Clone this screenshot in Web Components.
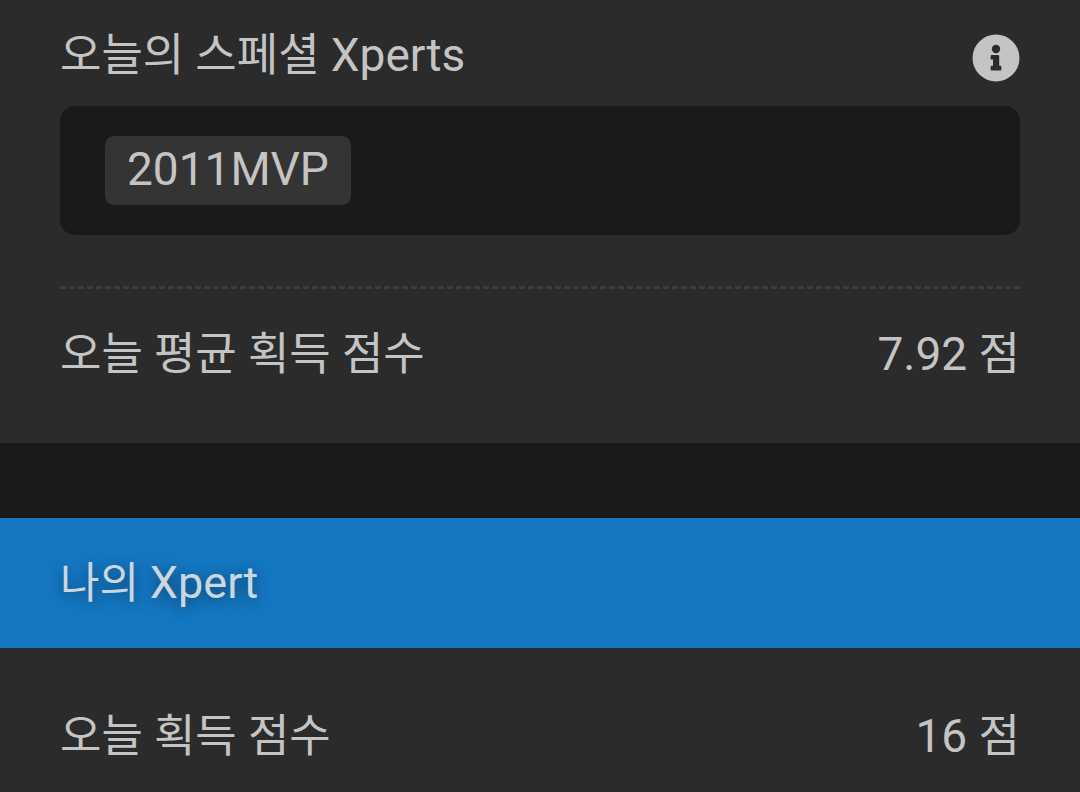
<!DOCTYPE html>
<html lang="ko">
<head>
<meta charset="utf-8">
<meta name="viewport" content="width=device-width, initial-scale=1">
<title>Xperts</title>
<style>
  body {
    margin: 0;
    background: #2b2b2b;
    color: #c4c4c4;
    font-family: Roboto, "Noto Sans CJK KR", sans-serif;
    font-size: 45px;
    line-height: 70px;
    --panel: #2b2b2b;
    --deep: #1a1a1a;
    --chip: #343434;
    --accent: #1477c2;
    --gutter: 60px;
  }

  .latin {
    font-size: 46px;
  }

  xpert-banner .latin {
    font-size: 45px;
  }
</style>
</head>
<body>
<xpert-page>
  <xpert-panel>
    <xpert-heading>오늘의 스페셜 <span class="latin">Xperts</span></xpert-heading>
    <xpert-list>
      <xpert-chip>2011MVP</xpert-chip>
    </xpert-list>
    <xpert-divider></xpert-divider>
    <score-row value="7.92" unit="점">오늘 평균 획득 점수</score-row>
  </xpert-panel>
  <xpert-banner>나의 <span class="latin">Xpert</span></xpert-banner>
  <xpert-panel>
    <score-row value="16" unit="점">오늘 획득 점수</score-row>
  </xpert-panel>
</xpert-page>

<script>
class XpertPage extends HTMLElement {
  constructor() {
    super();
    this.attachShadow({ mode: "open" }).innerHTML = `
      <style>
        :host {
          display: flex;
          flex-direction: column;
        }
      </style>
      <slot></slot>
    `;
  }
}

class XpertPanel extends HTMLElement {
  constructor() {
    super();
    this.attachShadow({ mode: "open" }).innerHTML = `
      <style>
        :host {
          display: flex;
          flex-direction: column;
          padding: 23px var(--gutter);
          background: var(--panel);
        }
      </style>
      <slot></slot>
    `;
  }
}

class XpertHeading extends HTMLElement {
  constructor() {
    super();
    this.attachShadow({ mode: "open" }).innerHTML = `
      <style>
        :host {
          display: flex;
          align-items: center;
          justify-content: space-between;
          margin-bottom: 18px;
          line-height: 64px;
        }

        h2 {
          margin: 0;
          font-size: inherit;
          font-weight: normal;
        }

        button {
          display: flex;
          padding: 4px 0 0;
          border: none;
          background: none;
          color: inherit;
          cursor: pointer;
        }

        svg {
          width: 48px;
          height: 48px;
        }
      </style>
      <h2><slot></slot></h2>
      <button type="button" aria-label="안내">
        <svg viewBox="0 0 48 48" aria-hidden="true">
          <circle cx="24" cy="24" r="23.5" fill="currentColor"/>
          <circle cx="24" cy="15" r="4.2" fill="#2b2b2b"/>
          <path fill="#2b2b2b" d="M19.8 21h6.2q1.2 0 1.2 1.2v9.6h1q1.2 0 1.2 1.2v2.2q0 1.2-1.2 1.2h-8.4q-1.2 0-1.2-1.2v-2.2q0-1.2 1.2-1.2h1.2v-6.2h-1.2q-1.2 0-1.2-1.2v-2.2q0-1.2 1.2-1.2z"/>
        </svg>
      </button>
    `;
  }
}

class XpertList extends HTMLElement {
  constructor() {
    super();
    this.attachShadow({ mode: "open" }).innerHTML = `
      <style>
        :host {
          display: flex;
          flex-wrap: wrap;
          gap: 15px;
          padding: 30px 45px;
          border-radius: 15px;
          background: var(--deep);
        }
      </style>
      <slot></slot>
    `;
  }
}

class XpertChip extends HTMLElement {
  constructor() {
    super();
    this.attachShadow({ mode: "open" }).innerHTML = `
      <style>
        :host {
          display: block;
          padding: 0 22px 3px;
          border-radius: 9px;
          background: var(--chip);
          font-size: 46px;
          line-height: 66px;
        }
      </style>
      <slot></slot>
    `;
  }
}

class XpertDivider extends HTMLElement {
  constructor() {
    super();
    this.attachShadow({ mode: "open" }).innerHTML = `
      <style>
        :host {
          display: block;
          margin-top: 51px;
          border-top: 3px dashed #3d3d3d;
        }
      </style>
    `;
  }
}

class ScoreRow extends HTMLElement {
  constructor() {
    super();
    this.attachShadow({ mode: "open" });
  }

  connectedCallback() {
    this.render();
  }

  render() {
    this.shadowRoot.innerHTML = `
      <style>
        :host {
          display: flex;
          align-items: baseline;
          justify-content: space-between;
          padding: 30px 0;
        }

        .number {
          font-size: 46px;
        }
      </style>
      <span><slot></slot></span>
      <span><span class="number">${this.getAttribute("value")} </span>${this.getAttribute("unit")}</span>
    `;
  }
}

class XpertBanner extends HTMLElement {
  constructor() {
    super();
    this.attachShadow({ mode: "open" }).innerHTML = `
      <style>
        :host {
          display: block;
          border-top: 75px solid var(--deep);
          padding: 30px var(--gutter);
          background: var(--accent);
          color: #ccd6de;
          text-shadow: 0 3px 15px rgba(0, 0, 0, 0.5);
        }

        h2 {
          margin: 0;
          font-size: 43px;
          font-weight: normal;
          line-height: 69px;
        }
      </style>
      <h2><slot></slot></h2>
    `;
  }
}

customElements.define("xpert-page", XpertPage);
customElements.define("xpert-panel", XpertPanel);
customElements.define("xpert-heading", XpertHeading);
customElements.define("xpert-list", XpertList);
customElements.define("xpert-chip", XpertChip);
customElements.define("xpert-divider", XpertDivider);
customElements.define("score-row", ScoreRow);
customElements.define("xpert-banner", XpertBanner);
</script>
</body>
</html>
